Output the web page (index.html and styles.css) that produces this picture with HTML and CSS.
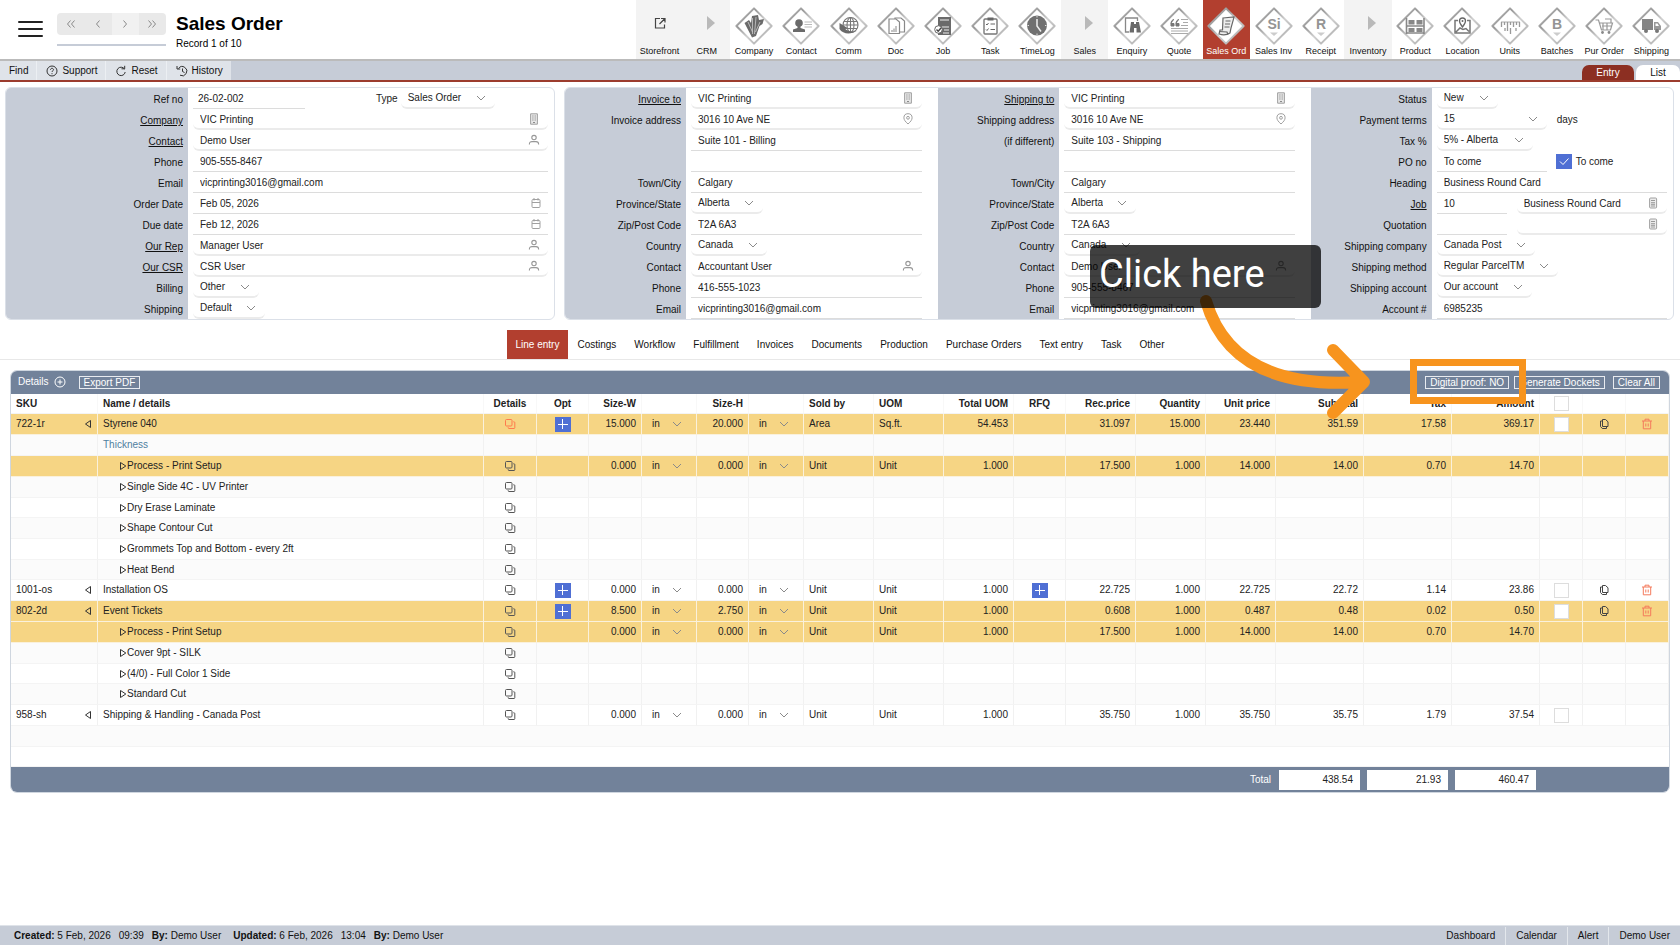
FILE: index.html
```html
<!DOCTYPE html>
<html lang="en">
<head>
<meta charset="utf-8">
<title>Sales Order</title>
<link rel="stylesheet" href="styles.css">
</head>
<body>
<svg class="sprite" aria-hidden="true">
  <defs>
    <linearGradient id="edge" x1="0" y1="0" x2="1" y2="1">
      <stop offset="0" stop-color="#d0d0d0"/><stop offset=".3" stop-color="#999"/><stop offset=".55" stop-color="#d0d0d0"/><stop offset="1" stop-color="#a4a4a4"/>
    </linearGradient>
  </defs>
  <symbol id="diamond" viewBox="0 0 38 38"><path d="M19 1.4 36.6 19 19 36.6 1.4 19z" fill="#fff" stroke="url(#edge)" stroke-width="2" stroke-linejoin="round"/></symbol>
  <symbol id="chev" viewBox="0 0 10 10"><path d="M1 3l4 4 4-4" fill="none" stroke="#8a8a8a"/></symbol>
  <symbol id="person" viewBox="0 0 12 12"><g fill="none" stroke="#979797" stroke-width="1.1"><circle cx="6" cy="3.6" r="2.2"/><path d="M1.4 10.6V10c0-1.6 1.2-2.4 2.6-2.4h4c1.400 0 2.600.8 2.600 2.400v.6"/></g></symbol>
  <symbol id="building" viewBox="0 0 12 12"><path d="M2.600.800h6.800v10.400H2.600z" fill="#e8e8e8" stroke="#a0a0a0"/><path d="M4.300 3h1.200M6.600 3h1.200M4.300 5h1.200M6.600 5h1.200M4.300 7h1.200M6.600 7h1.200M5 9.500h2" stroke="#8a8a8a"/></symbol>
  <symbol id="pin" viewBox="0 0 12 12"><g fill="none" stroke="#a0a0a0"><path d="M6 11C3.300 8.600 1.900 6.800 1.900 4.800a4.100 4.100 0 0 1 8.200 0C10.100 6.800 8.700 8.600 6 11z"/><circle cx="6" cy="4.800" r="1.400"/></g></symbol>
  <symbol id="cal" viewBox="0 0 12 12"><g fill="none" stroke="#a0a0a0"><rect x="2" y="2.500" width="8" height="8" rx="1"/><path d="M2 5.500h8M4 1v2.500M8 1v2.500"/></g></symbol>
  <symbol id="calc" viewBox="0 0 12 12"><rect x="2.600" y="1" width="7" height="10" rx="1" fill="#ececec" stroke="#a0a0a0"/><path d="M4 3.500h4M4 5.700h4M4 7.300h4M4 9h4" stroke="#999"/></symbol>
  <symbol id="copies" viewBox="0 0 12 12"><g fill="none" stroke="currentColor"><rect x="1.500" y="1.500" width="6.500" height="6.500" rx="1"/><path d="M9.300 3.800h.7a.8.800 0 0 1 .8.800v5.100a.8.800 0 0 1-.8.800H5a.8.800 0 0 1-.8-.8V9.200"/></g></symbol>
  <symbol id="dup" viewBox="0 0 12 12"><g fill="none" stroke="#444"><path d="M4.500 1.500h3l2.500 2.300v4.700h-5.500z"/><path d="M4.300 3H2.500v5.500l1.800 2h4.200V8.700"/></g></symbol>
  <symbol id="trash" viewBox="0 0 12 12"><g fill="none" stroke="#f47a5c"><path d="M1 3h10M4 3V1.200h4V3M2.300 3v7.800h7.400V3M4.800 5.500v3M7.200 5.500v3"/></g></symbol>
  <symbol id="left" viewBox="0 0 8 10"><path d="M6.500 1.500v7L1.500 5z" fill="none" stroke="#333"/></symbol>
  <symbol id="right" viewBox="0 0 8 10"><path d="M1.500 1.500v7L6.800 5z" fill="none" stroke="#333"/></symbol>
  <symbol id="play" viewBox="0 0 8 14"><path d="M0 0l8 7-8 7z" fill="#b9b9b9"/></symbol>
</svg>

<div class="page">
<header class="top">
  <button class="burger" aria-label="Menu"><i></i><i></i><i></i></button>
  <div class="pager-box">
    <div class="pager">
      <button aria-label="First"><svg viewBox="0 0 10 10"><path d="M4.500 1.500 1.500 5l3 3.500M8.500 1.500 5.500 5l3 3.500"/></svg></button>
      <button aria-label="Previous"><svg viewBox="0 0 10 10"><path d="M6.500 1.500 3.500 5l3 3.500"/></svg></button>
      <button aria-label="Next" class="dim"><svg viewBox="0 0 10 10"><path d="M3.500 1.500l3 3.500-3 3.500"/></svg></button>
      <button aria-label="Last"><svg viewBox="0 0 10 10"><path d="M1.500 1.500l3 3.500-3 3.500M5.500 1.500l3 3.500-3 3.500"/></svg></button>
    </div>
  </div>
  <div class="heading"><h1>Sales Order</h1><p>Record 1 of 10</p></div>
  <nav class="modules">
    <a href="#" class="group"><svg viewBox="0 0 38 38"><path d="M19 11.500h-4.500v9.500h9v-3.500M20 11.500h4v4M24 11.500l-5.500 5.500" fill="none" stroke="#444" stroke-width="1.200"/></svg>Storefront</a>
    <a href="#" class="group"><svg viewBox="0 0 38 38"><use href="#play" x="19" y="9" width="8" height="14"/></svg>CRM</a>
    <a href="#"><svg viewBox="0 0 38 38"><use href="#diamond"/><path d="M9.500 16l4.500-3 2 3 1-7 6-1 1 5 5-1-1.500 5-3 2-3.500 10-4 1.500z" fill="#6a6a6a"/><path d="M17.500 11v16M21 10l-1.500 17M13 15l4.500 10M25 15l-4.500 10" stroke="#ccc" stroke-width=".8"/></svg>Company</a>
    <a href="#"><svg viewBox="0 0 38 38"><use href="#diamond"/><circle cx="17" cy="16" r="3.800" fill="#6a6a6a"/><path d="M15.500 18h3v3l4.500 1.500V25h-12v-2.500l4.500-1.500z" fill="#6a6a6a"/><path d="M22.500 15h7.500M22.500 17.500h7.500M22.500 20h7.500" stroke="#bbb"/></svg>Contact</a>
    <a href="#"><svg viewBox="0 0 38 38"><use href="#diamond"/><g fill="none" stroke="#777" stroke-width="1.100"><circle cx="20.500" cy="18" r="7.500"/><ellipse cx="20.500" cy="18" rx="3.500" ry="7.500"/><path d="M13 18h15M14 14.500h13M14 21.500h13M20.500 10.500v15"/></g><path d="M9.500 16v6c3 5 11 6 17 2-4 1-9 0-12-2.500l3-.5z" fill="#6a6a6a"/></svg>Comm</a>
    <a href="#"><svg viewBox="0 0 38 38"><use href="#diamond"/><g fill="#fff" stroke="#888" stroke-width="1.200"><path d="M18 11h6l3.500 3v11h-9.500z"/><path d="M12 12h7l3.500 3v11.500H12z"/></g><path d="M15 25v-2M17 25v-3.500M19 25v-6" stroke="#888"/></svg>Doc</a>
    <a href="#"><svg viewBox="0 0 38 38"><use href="#diamond"/><path d="M14 10h13v18H14z" fill="#6a6a6a"/><path d="M16 13h9M18 20h7M20 23h5M19 26h6" stroke="#eee" stroke-width="1.200"/><circle cx="14.500" cy="22.500" r="3.800" fill="#fff" stroke="#666"/><path d="M12.500 22.500l1.700 1.700 3-3.500" fill="none" stroke="#444" stroke-width="1.400"/></svg>Job</a>
    <a href="#"><svg viewBox="0 0 38 38"><use href="#diamond"/><rect x="13" y="12" width="13" height="15" rx="1" fill="#fff" stroke="#777" stroke-width="1.400"/><path d="M16.500 10.500h6v3h-6z" fill="#666"/><path d="M15 17l1 1 1.500-2M15 22.500l1 1 1.500-2M19.500 17H24M19.500 22.500H24" fill="none" stroke="#666"/></svg>Task</a>
    <a href="#"><svg viewBox="0 0 38 38"><use href="#diamond"/><circle cx="19" cy="18.500" r="10" fill="#707070"/><path d="M19 12v7l4 5.500" fill="none" stroke="#eee" stroke-width="1.500"/><path d="M19 9v1.500M28.500 18.500H27M9.500 18.500H11M19 28v-1.500" stroke="#ddd"/></svg>TimeLog</a>
    <a href="#" class="group"><svg viewBox="0 0 38 38"><use href="#play" x="19" y="9" width="8" height="14"/></svg>Sales</a>
    <a href="#"><svg viewBox="0 0 38 38"><use href="#diamond"/><path d="M16 25h-3.500V11h12v3" fill="none" stroke="#888" stroke-width="1.300"/><path d="M18 15h3v2h2v-2h3l2 10.500h-4.500V21h-2.500v4.500H16.500z" fill="#6a6a6a"/></svg>Enquiry</a>
    <a href="#"><svg viewBox="0 0 38 38"><use href="#diamond"/><path d="M11 17c0-3 1-4 3-4.500M11 16.500h3v2.500h-3zM16 17c0-3 1-4 3-4.500M16 16.500h3v2.500h-3z" fill="#777" stroke="#777"/><path d="M21 12.500h7M23 15.500h5M21 18.500h7M11 21.500h17M11 24h17M11 26.500h17" stroke="#aaa"/></svg>Quote</a>
    <a href="#" class="on" aria-current="page"><svg viewBox="0 0 38 38"><use href="#diamond"/><path d="M16 11l11-1c-1 5-3 9-4 16-3 2-8 2-11 1l1-4h2.500z" fill="#eee" stroke="#666" stroke-width="1.200"/><path d="M12 24.500l8 .5 1 2.500M18.500 14h5M18 17h5M17.500 20h5" fill="none" stroke="#666" stroke-width="1.200"/></svg>Sales Ord</a>
    <a href="#"><svg viewBox="0 0 38 38"><use href="#diamond"/><text x="19" y="22" class="glyph">Si</text><path d="M15 25.500h8l-4 3.500z" fill="#ccc"/></svg>Sales Inv</a>
    <a href="#"><svg viewBox="0 0 38 38"><use href="#diamond"/><text x="19" y="22" class="glyph">R</text><path d="M15 25.500h8l-4 3.500z" fill="#ccc"/></svg>Receipt</a>
    <a href="#" class="group"><svg viewBox="0 0 38 38"><use href="#play" x="19" y="9" width="8" height="14"/></svg>Inventory</a>
    <a href="#"><svg viewBox="0 0 38 38"><use href="#diamond"/><path d="M10.500 11v16M28 11v16M10 19h18M10 26h18" stroke="#888" stroke-width="1.600"/><path d="M12.500 13h6v4.500h-6zM20.500 13h6v4.500h-6zM12.500 21h6v4h-6zM20.500 21h6v4h-6z" fill="#888"/></svg>Product</a>
    <a href="#"><svg viewBox="0 0 38 38"><use href="#diamond"/><path d="M15 13.500h-3v12.500h15V13.500h-3M13 25l4-4 3 1.500 3-1 3 3" fill="none" stroke="#777" stroke-width="1.500"/><path d="M19.500 20c-2-2.500-3-4-3-6a3 3 0 0 1 6 0c0 2-1 3.500-3 6z" fill="#fff" stroke="#666" stroke-width="1.300"/><circle cx="19.500" cy="14" r="1" fill="#666"/></svg>Location</a>
    <a href="#"><svg viewBox="0 0 38 38"><use href="#diamond"/><path d="M10 15h19" stroke="#aaa"/><path d="M10.500 15v5M13.500 15v3M16.500 15v9M19.500 15v3M22.500 15v5M25.500 15v3M28.500 15v5M19.500 21v6M14 21v3M25 21v3" stroke="#999" stroke-width="1.300"/></svg>Units</a>
    <a href="#"><svg viewBox="0 0 38 38"><use href="#diamond"/><text x="19" y="22" class="glyph">B</text><path d="M15 25.500h8l-4 3.500z" fill="#ccc"/></svg>Batches</a>
    <a href="#"><svg viewBox="0 0 38 38"><use href="#diamond"/><path d="M10.500 13h3l3 10h9l2-7H14.500M17 19h9M18 16v7M22 16v7M20 12h6v4" fill="none" stroke="#999" stroke-width="1.200"/><circle cx="17.500" cy="25.500" r="1.400" fill="#888"/><circle cx="24" cy="25.500" r="1.400" fill="#888"/></svg>Pur Order</a>
    <a href="#"><svg viewBox="0 0 38 38"><use href="#diamond"/><path d="M10 12h11v11H10z" fill="#858585"/><path d="M22 15h4l3 4v4h-7z" fill="#999"/><path d="M23.500 16.500h2l1.500 2.500h-3.500z" fill="#fff"/><circle cx="14" cy="24" r="2" fill="#777"/><circle cx="25" cy="24" r="2" fill="#777"/></svg>Shipping</a>
  </nav>
</header>

<div class="toolbar">
  <button>Find</button>
  <button><svg viewBox="0 0 12 12"><circle cx="6" cy="6" r="5"/><path d="M4.500 4.800c0-2 3-2 3 0 0 1-1.500 1-1.500 2.200M6 8.200v1"/></svg>Support</button>
  <button><svg viewBox="0 0 12 12"><path d="M9.500 4A4.200 4.200 0 1 0 10.200 7M6.500 3.800h3.200V.8"/></svg>Reset</button>
  <button><svg viewBox="0 0 12 12"><path d="M2.500 3.500A4.600 4.600 0 1 1 4 10.200M1 1v3h3.200M6.500 3.500v3l2 1"/></svg>History</button>
  <div class="views"><a href="#" class="on">Entry</a><a href="#">List</a></div>
</div>

<form class="forms">
  <section class="panel main-info">
    <div class="col">
      <div class="row"><label for="ref">Ref no</label><div class="val"><input id="ref" class="ref" value="26-02-002"><label class="inline type" for="type">Type</label><span class="pick"><select id="type"><option>Sales Order</option></select><svg><use href="#chev"/></svg></span></div></div>
      <div class="row"><label for="co"><a href="#">Company</a></label><div class="val"><span class="look"><input id="co" value="VIC Printing"><svg><use href="#building"/></svg></span></div></div>
      <div class="row"><label for="ct"><a href="#">Contact</a></label><div class="val"><span class="look"><input id="ct" value="Demo User"><svg><use href="#person"/></svg></span></div></div>
      <div class="row"><label for="ph">Phone</label><div class="val"><input id="ph" value="905-555-8467"></div></div>
      <div class="row"><label for="em">Email</label><div class="val"><input id="em" value="vicprinting3016@gmail.com"></div></div>
      <div class="row"><label for="od">Order Date</label><div class="val"><span class="look date"><input id="od" value="Feb 05, 2026"><svg><use href="#cal"/></svg></span></div></div>
      <div class="row"><label for="dd">Due date</label><div class="val"><span class="look date"><input id="dd" value="Feb 12, 2026"><svg><use href="#cal"/></svg></span></div></div>
      <div class="row"><label for="rep"><a href="#">Our Rep</a></label><div class="val"><span class="look"><input id="rep" value="Manager User"><svg><use href="#person"/></svg></span></div></div>
      <div class="row"><label for="csr"><a href="#">Our CSR</a></label><div class="val"><span class="look"><input id="csr" value="CSR User"><svg><use href="#person"/></svg></span></div></div>
      <div class="row"><label for="bill">Billing</label><div class="val"><span class="pick"><select id="bill"><option>Other</option></select><svg><use href="#chev"/></svg></span></div></div>
      <div class="row"><label for="ship">Shipping</label><div class="val"><span class="pick"><select id="ship"><option>Default</option></select><svg><use href="#chev"/></svg></span></div></div>
    </div>
  </section>
  <section class="panel details-info">
    <div class="col wide-end">
      <div class="row"><label for="ito"><a href="#">Invoice to</a></label><div class="val"><span class="look"><input id="ito" value="VIC Printing"><svg><use href="#building"/></svg></span></div></div>
      <div class="row"><label for="ia">Invoice address</label><div class="val"><span class="look"><input id="ia" value="3016 10 Ave NE"><svg><use href="#pin"/></svg></span></div></div>
      <div class="row"><label for="ia2"></label><div class="val"><input id="ia2" aria-label="Invoice address line 2" value="Suite 101 - Billing"></div></div>
      <div class="row"><label for="ia3"></label><div class="val"><input id="ia3" aria-label="Invoice address line 3"></div></div>
      <div class="row"><label for="ic">Town/City</label><div class="val"><input id="ic" value="Calgary"></div></div>
      <div class="row"><label for="ip">Province/State</label><div class="val"><span class="pick"><select id="ip"><option>Alberta</option></select><svg><use href="#chev"/></svg></span></div></div>
      <div class="row"><label for="iz">Zip/Post Code</label><div class="val"><input id="iz" value="T2A 6A3"></div></div>
      <div class="row"><label for="icn">Country</label><div class="val"><span class="pick"><select id="icn"><option>Canada</option></select><svg><use href="#chev"/></svg></span></div></div>
      <div class="row"><label for="ict">Contact</label><div class="val"><span class="look"><input id="ict" value="Accountant User"><svg><use href="#person"/></svg></span></div></div>
      <div class="row"><label for="iph">Phone</label><div class="val"><input id="iph" value="416-555-1023"></div></div>
      <div class="row"><label for="iem">Email</label><div class="val"><input id="iem" value="vicprinting3016@gmail.com"></div></div>
    </div>
    <div class="col wide-end">
      <div class="row"><label for="sto"><a href="#">Shipping to</a></label><div class="val"><span class="look"><input id="sto" value="VIC Printing"><svg><use href="#building"/></svg></span></div></div>
      <div class="row"><label for="sa">Shipping address</label><div class="val"><span class="look"><input id="sa" value="3016 10 Ave NE"><svg><use href="#pin"/></svg></span></div></div>
      <div class="row"><label for="sa2">(if different)</label><div class="val"><input id="sa2" value="Suite 103 - Shipping"></div></div>
      <div class="row"><label for="sa3"></label><div class="val"><input id="sa3" aria-label="Shipping address line 3"></div></div>
      <div class="row"><label for="sc">Town/City</label><div class="val"><input id="sc" value="Calgary"></div></div>
      <div class="row"><label for="sp">Province/State</label><div class="val"><span class="pick"><select id="sp"><option>Alberta</option></select><svg><use href="#chev"/></svg></span></div></div>
      <div class="row"><label for="sz">Zip/Post Code</label><div class="val"><input id="sz" value="T2A 6A3"></div></div>
      <div class="row"><label for="scn">Country</label><div class="val"><span class="pick"><select id="scn"><option>Canada</option></select><svg><use href="#chev"/></svg></span></div></div>
      <div class="row"><label for="sct">Contact</label><div class="val"><span class="look"><input id="sct" value="Demo User"><svg><use href="#person"/></svg></span></div></div>
      <div class="row"><label for="sph">Phone</label><div class="val"><input id="sph" value="905-555-8467"></div></div>
      <div class="row"><label for="sem">Email</label><div class="val"><input id="sem" value="vicprinting3016@gmail.com"></div></div>
    </div>
    <div class="col">
      <div class="row"><label for="st">Status</label><div class="val"><span class="pick"><select id="st"><option>New</option></select><svg><use href="#chev"/></svg></span></div></div>
      <div class="row"><label for="pt">Payment terms</label><div class="val"><span class="pick fixed"><select id="pt"><option>15</option></select><svg><use href="#chev"/></svg></span><span class="unit">days</span></div></div>
      <div class="row"><label for="tx">Tax %</label><div class="val"><span class="pick"><select id="tx"><option>5% - Alberta</option></select><svg><use href="#chev"/></svg></span></div></div>
      <div class="row"><label for="po">PO no</label><div class="val"><input id="po" class="po" value="To come"><label class="inline come"><input type="checkbox" checked><svg viewBox="0 0 16 15"><path d="M4 7.500l3 3 5.500-6" fill="none" stroke="#fff"/></svg>To come</label></div></div>
      <div class="row"><label for="hd">Heading</label><div class="val"><input id="hd" value="Business Round Card"></div></div>
      <div class="row"><label for="jb"><a href="#">Job</a></label><div class="val pair"><input id="jb" class="short-in" value="10"><span class="look"><input aria-label="Job name" value="Business Round Card"><svg><use href="#calc"/></svg></span></div></div>
      <div class="row"><label for="qt">Quotation</label><div class="val pair"><input id="qt" class="short-in"><span class="look"><input aria-label="Quotation name"><svg><use href="#calc"/></svg></span></div></div>
      <div class="row"><label for="sco">Shipping company</label><div class="val"><span class="pick"><select id="sco"><option>Canada Post</option></select><svg><use href="#chev"/></svg></span></div></div>
      <div class="row"><label for="sm">Shipping method</label><div class="val"><span class="pick"><select id="sm"><option>Regular ParcelTM</option></select><svg><use href="#chev"/></svg></span></div></div>
      <div class="row"><label for="sac">Shipping account</label><div class="val"><span class="pick"><select id="sac"><option>Our account</option></select><svg><use href="#chev"/></svg></span></div></div>
      <div class="row"><label for="acn">Account #</label><div class="val"><input id="acn" value="6985235"></div></div>
    </div>
  </section>
</form>

<nav class="tabs">
  <a href="#" class="on">Line entry</a><a href="#">Costings</a><a href="#">Workflow</a><a href="#">Fulfillment</a><a href="#">Invoices</a><a href="#">Documents</a><a href="#">Production</a><a href="#">Purchase Orders</a><a href="#">Text entry</a><a href="#">Task</a><a href="#">Other</a>
</nav>

<section class="lines">
  <div class="bar">
    <span>Details</span>
    <button class="add" aria-label="Add line"><svg viewBox="0 0 12 12"><circle cx="6" cy="6" r="5"/><path d="M6 3.500v5M3.500 6h5"/></svg></button>
    <button class="ghost">Export PDF</button>
    <div class="actions"><button class="ghost">Digital proof: NO</button><button class="ghost">Generate Dockets</button><button class="ghost clear">Clear All</button></div>
  </div>
  <table>
    <colgroup><col class="w87"><col><col class="w53"><col class="w52"><col class="w53"><col class="w55"><col class="w52"><col class="w55"><col class="w70"><col class="w70"><col class="w70"><col class="w52"><col class="w70"><col class="w70"><col class="w70"><col class="w88"><col class="w88"><col class="w88"><col class="w43"><col class="w43"><col class="w43"></colgroup>
    <thead><tr><th>SKU<th>Name / details<th class="c">Details<th class="c">Opt<th class="r">Size-W<th><th class="r">Size-H<th><th>Sold by<th>UOM<th class="r">Total UOM<th class="c">RFQ<th class="r">Rec.price<th class="r">Quantity<th class="r">Unit price<th class="r">Subtotal<th class="r">Tax<th class="r">Amount<th class="c"><input type="checkbox" aria-label="Select all"><th><th></tr></thead>
    <tbody>
      <tr class="hot"><td class="sku"><span>722-1r<svg><use href="#left"/></svg></span><td>Styrene 040<td class="c red"><svg><use href="#copies"/></svg><td class="c"><button class="plus" aria-label="Options"></button><td class="r">15.000<td><span class="pick"><select aria-label="Width unit"><option>in</option></select><svg><use href="#chev"/></svg></span><td class="r">20.000<td><span class="pick"><select aria-label="Height unit"><option>in</option></select><svg><use href="#chev"/></svg></span><td>Area<td>Sq.ft.<td class="r">54.453<td><td class="r">31.097<td class="r">15.000<td class="r">23.440<td class="r">351.59<td class="r">17.58<td class="r">369.17<td class="c"><input type="checkbox" aria-label="Select line"><td class="c"><svg><use href="#dup"/></svg><td class="c"><svg><use href="#trash"/></svg></tr>
      <tr><td><td class="note">Thickness<td><td><td><td><td><td><td><td><td><td><td><td><td><td><td><td><td><td><td></tr>
      <tr class="hot"><td><td class="sub"><span><svg><use href="#right"/></svg>Process - Print Setup</span><td class="c"><svg><use href="#copies"/></svg><td><td class="r">0.000<td><span class="pick"><select aria-label="Width unit"><option>in</option></select><svg><use href="#chev"/></svg></span><td class="r">0.000<td><span class="pick"><select aria-label="Height unit"><option>in</option></select><svg><use href="#chev"/></svg></span><td>Unit<td>Unit<td class="r">1.000<td><td class="r">17.500<td class="r">1.000<td class="r">14.000<td class="r">14.00<td class="r">0.70<td class="r">14.70<td><td><td></tr>
      <tr><td><td class="sub"><span><svg><use href="#right"/></svg>Single Side 4C - UV Printer</span><td class="c"><svg><use href="#copies"/></svg><td><td><td><td><td><td><td><td><td><td><td><td><td><td><td><td><td><td></tr>
      <tr class="tight"><td><td class="sub"><span><svg><use href="#right"/></svg>Dry Erase Laminate</span><td class="c"><svg><use href="#copies"/></svg><td><td><td><td><td><td><td><td><td><td><td><td><td><td><td><td><td><td></tr>
      <tr><td><td class="sub"><span><svg><use href="#right"/></svg>Shape Contour Cut</span><td class="c"><svg><use href="#copies"/></svg><td><td><td><td><td><td><td><td><td><td><td><td><td><td><td><td><td><td></tr>
      <tr><td><td class="sub"><span><svg><use href="#right"/></svg>Grommets Top and Bottom - every 2ft</span><td class="c"><svg><use href="#copies"/></svg><td><td><td><td><td><td><td><td><td><td><td><td><td><td><td><td><td><td></tr>
      <tr class="tight"><td><td class="sub"><span><svg><use href="#right"/></svg>Heat Bend</span><td class="c"><svg><use href="#copies"/></svg><td><td><td><td><td><td><td><td><td><td><td><td><td><td><td><td><td><td></tr>
      <tr><td class="sku"><span>1001-os<svg><use href="#left"/></svg></span><td>Installation OS<td class="c"><svg><use href="#copies"/></svg><td class="c"><button class="plus" aria-label="Options"></button><td class="r">0.000<td><span class="pick"><select aria-label="Width unit"><option>in</option></select><svg><use href="#chev"/></svg></span><td class="r">0.000<td><span class="pick"><select aria-label="Height unit"><option>in</option></select><svg><use href="#chev"/></svg></span><td>Unit<td>Unit<td class="r">1.000<td class="c"><button class="plus" aria-label="Request quote"></button><td class="r">22.725<td class="r">1.000<td class="r">22.725<td class="r">22.72<td class="r">1.14<td class="r">23.86<td class="c"><input type="checkbox" aria-label="Select line"><td class="c"><svg><use href="#dup"/></svg><td class="c"><svg><use href="#trash"/></svg></tr>
      <tr class="hot"><td class="sku"><span>802-2d<svg><use href="#left"/></svg></span><td>Event Tickets<td class="c"><svg><use href="#copies"/></svg><td class="c"><button class="plus" aria-label="Options"></button><td class="r">8.500<td><span class="pick"><select aria-label="Width unit"><option>in</option></select><svg><use href="#chev"/></svg></span><td class="r">2.750<td><span class="pick"><select aria-label="Height unit"><option>in</option></select><svg><use href="#chev"/></svg></span><td>Unit<td>Unit<td class="r">1.000<td><td class="r">0.608<td class="r">1.000<td class="r">0.487<td class="r">0.48<td class="r">0.02<td class="r">0.50<td class="c"><input type="checkbox" aria-label="Select line"><td class="c"><svg><use href="#dup"/></svg><td class="c"><svg><use href="#trash"/></svg></tr>
      <tr class="hot"><td><td class="sub"><span><svg><use href="#right"/></svg>Process - Print Setup</span><td class="c"><svg><use href="#copies"/></svg><td><td class="r">0.000<td><span class="pick"><select aria-label="Width unit"><option>in</option></select><svg><use href="#chev"/></svg></span><td class="r">0.000<td><span class="pick"><select aria-label="Height unit"><option>in</option></select><svg><use href="#chev"/></svg></span><td>Unit<td>Unit<td class="r">1.000<td><td class="r">17.500<td class="r">1.000<td class="r">14.000<td class="r">14.00<td class="r">0.70<td class="r">14.70<td><td><td></tr>
      <tr><td><td class="sub"><span><svg><use href="#right"/></svg>Cover 9pt - SILK</span><td class="c"><svg><use href="#copies"/></svg><td><td><td><td><td><td><td><td><td><td><td><td><td><td><td><td><td><td></tr>
      <tr class="tight"><td><td class="sub"><span><svg><use href="#right"/></svg>(4/0) - Full Color 1 Side</span><td class="c"><svg><use href="#copies"/></svg><td><td><td><td><td><td><td><td><td><td><td><td><td><td><td><td><td><td></tr>
      <tr><td><td class="sub"><span><svg><use href="#right"/></svg>Standard Cut</span><td class="c"><svg><use href="#copies"/></svg><td><td><td><td><td><td><td><td><td><td><td><td><td><td><td><td><td><td></tr>
      <tr><td class="sku"><span>958-sh<svg><use href="#left"/></svg></span><td>Shipping &amp; Handling - Canada Post<td class="c"><svg><use href="#copies"/></svg><td><td class="r">0.000<td><span class="pick"><select aria-label="Width unit"><option>in</option></select><svg><use href="#chev"/></svg></span><td class="r">0.000<td><span class="pick"><select aria-label="Height unit"><option>in</option></select><svg><use href="#chev"/></svg></span><td>Unit<td>Unit<td class="r">1.000<td><td class="r">35.750<td class="r">1.000<td class="r">35.750<td class="r">35.75<td class="r">1.79<td class="r">37.54<td class="c"><input type="checkbox" aria-label="Select line"><td><td></tr>
      <tr class="blank"><td colspan="21"></tr>
      <tr class="blank tight"><td colspan="21"></tr>
    </tbody>
    <tfoot><tr><th colspan="15" class="r">Total<td><output>438.54</output><td><output>21.93</output><td><output>460.47</output><td colspan="3"></tr></tfoot>
  </table>
</section>

<footer class="status">
  <p><b>Created:</b> 5 Feb, 2026</p><p>09:39</p><p class="end"><b>By:</b> Demo User</p><p><b>Updated:</b> 6 Feb, 2026</p><p>13:04</p><p><b>By:</b> Demo User</p>
  <nav><a href="#">Dashboard</a><a href="#">Calendar</a><a href="#">Alert</a><a href="#">Demo User</a></nav>
</footer>

<svg class="arrow" viewBox="0 0 180 130" aria-hidden="true"><path d="M16 11C32 66 78 98 170 92M143 60l31 32-31 31"/></svg>
<div class="frame"></div>
<div class="callout">Click here</div>
</div>
</body>
</html>
```
FILE: styles.css
```css
* { box-sizing: border-box; }
body { margin: 0; background: #fff; color: #222; font: 10px/12px "Liberation Sans", Arial, sans-serif; }
a { color: inherit; text-decoration: none; }
p, h1 { margin: 0; }
button, input, select { font: inherit; color: inherit; margin: 0; padding: 0; border: 0; background: none; border-radius: 0; }
svg { display: block; }
.sprite { position: absolute; width: 0; height: 0; }
.page { position: relative; min-height: 100vh; display: flex; flex-direction: column; overflow: hidden; }

/* header */
.top { display: flex; height: 61px; border-bottom: 2px solid #bbb; padding-right: 5px; }
.burger { display: flex; flex-direction: column; gap: 5px; width: 25px; margin: 21px 14px 0 18px; }
.burger i { height: 2px; background: #222; border-radius: 1px; }
.pager-box { width: 109px; height: 46px; margin: 0 10px 0 0; padding-top: 13px; border-bottom: 2px solid #c6ccd7; }
.pager { display: grid; grid-template-columns: repeat(4, 1fr); height: 22px; background: #e9e9e9; border-radius: 4px; overflow: hidden; }
.pager button { display: grid; place-items: center; }
.pager .dim { background: #f1f1f1; }
.pager svg { width: 10px; height: 10px; fill: none; stroke: #888; }
.heading { padding-top: 13px; color: #000; }
.heading h1 { font-size: 19px; line-height: 22px; }
.heading p { margin-top: 3px; }
.modules { display: grid; grid-template-columns: repeat(22, 1fr); width: 1039px; margin-left: auto; font-size: 9px; color: #111; }
.modules a { display: flex; flex-direction: column; align-items: center; padding-top: 7px; white-space: nowrap; }
.modules svg { width: 38px; height: 38px; }
.modules .group { background: #f3f3f3; }
.modules .on { background: #b23f2f; color: #fff; }
.glyph { font: bold 14px "Liberation Sans", Arial, sans-serif; fill: #949494; text-anchor: middle; }

/* toolbar */
.toolbar { display: flex; height: 21px; background: #c6ccd7; border-bottom: 2px solid #9c3c2e; color: #111; }
.toolbar button { display: flex; align-items: center; gap: 4px; padding: 0 8px 0 9px; background: #dfe3e9; border-right: 1px solid #eceff3; }
.toolbar button:last-of-type { border-right: 0; }
.toolbar svg { width: 12px; height: 12px; fill: none; stroke: #333; }
.views { display: flex; gap: 2px; margin-left: auto; padding-top: 4px; }
.views a { width: 52px; padding-top: 2px; text-align: center; background: #fff; border-radius: 7px 7px 0 0; }
.views a:last-child { width: 44px; }
.views .on { background: #8c2f22; color: #fff; }

/* form panels */
.forms { display: grid; grid-template-columns: 550fr 1110fr; gap: 9px; padding: 5px 6px 0 5px; }
.panel { border: 1px solid #dbe0e8; border-radius: 6px; overflow: hidden; }
.details-info { display: grid; grid-template-columns: 374fr 373fr 363fr; }
.row { display: grid; grid-template-columns: 121px 1fr; height: 21px; }
.main-info .row { grid-template-columns: 182px 1fr; }
.row > label { padding: 6px 5px 0 0; text-align: right; background: #c6ccd7; color: #111; }
.row label a { text-decoration: underline; }
.val { display: flex; min-width: 0; padding: 0 6px 0 5px; }
.wide-end .val { padding-right: 16px; }
.val input { flex: 1; min-width: 0; padding: 1px 7px 0; border-bottom: 1px solid #dcdcdc; }
.val .ref { flex: 0 0 112px; padding: 1px 5px 0; }
.inline { display: flex; align-items: center; }
.type { margin: 0 3px 0 71px; }
.look { display: flex; flex: 1; min-width: 0; align-items: center; padding-right: 8px; border-bottom: 2px solid #ebebeb; border-radius: 0 0 6px 6px; }
.look input { height: 19px; border-bottom: 0; }
.look svg { width: 12px; height: 12px; }
.look.date { padding-right: 6px; border-bottom: 1px solid #dcdcdc; border-radius: 0; }
.pick { display: inline-grid; align-items: center; border-bottom: 2px solid #ebebeb; border-radius: 0 0 6px 6px; }
.pick select { grid-area: 1 / 1; height: 19px; appearance: none; padding: 1px 33px 0 7px; }
.pick svg { grid-area: 1 / 1; justify-self: end; width: 10px; height: 10px; margin-right: 9px; pointer-events: none; }
.pick.fixed { width: 110px; }
.unit { padding: 5px 0 0 10px; }
.val .po { flex: 0 0 110px; }
.come { gap: 4px; margin-left: 9px; }
.come input { display: none; }
.come svg { width: 16px; height: 15px; background: #4f6fd4; }
.pair { gap: 10px; }
.val .short-in { flex: 0 0 70px; }

/* section tabs */
.tabs { display: flex; justify-content: center; margin-top: 10px; border-bottom: 1px solid #e8e8e8; color: #111; }
.tabs a { padding: 9px 9px 8px; }
.tabs .on { background: #b23f2f; color: #fff; }

/* order lines */
.lines { margin: 10px 10px 0; border: 1px solid #cfd6df; border-radius: 7px; overflow: hidden; }
.bar { display: flex; align-items: center; height: 23px; padding: 0 9px 1px 7px; background: #72829a; color: #fff; }
.add { margin: 0 13px 0 5px; }
.add svg { width: 12px; height: 12px; fill: none; stroke: #fff; }
.ghost { height: 13px; padding: 0 4px; line-height: 11px; border: 1px solid #e8ebf0; }
.actions { display: flex; gap: 5px; margin-left: auto; }
.clear { margin-left: 3px; }
table { width: 100%; table-layout: fixed; border-collapse: separate; border-spacing: 0; }
.w43 { width: 43px; } .w52 { width: 52px; } .w53 { width: 53px; } .w55 { width: 55px; } .w70 { width: 70px; } .w87 { width: 87px; } .w88 { width: 88px; }
th, td { height: 21px; padding: 0 5px; text-align: left; white-space: nowrap; border-right: 1px solid #f1f1f1; border-bottom: 1px solid #f4f4f4; }
thead th { height: 20px; border-right-color: #f8f8f8; }
.tight td { height: 20px; }
tbody tr:nth-child(even) { background: #fbfbfb; }
tbody .hot, tbody .hot:nth-child(even) { background: #f6d584; }
.hot td { border-color: #faf1dc; }
.r { text-align: right; padding-right: 5px; }
.c { text-align: center; padding: 0; }
.c svg { width: 12px; height: 12px; margin: 0 auto; color: #555; }
.c.red svg { color: #ff7a4d; }
.sku span, .sub span { display: flex; align-items: center; }
.sku span { justify-content: space-between; }
.sku svg, .sub svg { width: 8px; height: 10px; }
.sku { padding-right: 5px; }
.sub { padding-left: 21px; }
.note { color: #4f7f9f; }
td .pick { display: grid; border: 0; }
td .pick select { padding: 0 20px 0 5px; }
td .pick svg { margin-right: 9px; }
.plus { display: block; width: 16px; height: 15px; margin: 0 auto; background: linear-gradient(#fff, #fff) center / 10px 1px no-repeat, linear-gradient(#fff, #fff) center / 1px 10px no-repeat, #4f6fd4; }
.c input { display: block; width: 15px; height: 15px; margin: 0 auto; appearance: none; background: #fff; border: 1px solid #ddd; }
.blank td { border-right: 0; }
tfoot th, tfoot td { height: 25px; padding: 0 4px 0 3px; background: #72829a; border: 0; color: #fff; font-weight: normal; }
output { display: block; padding: 4px 7px; text-align: right; color: #222; background: #fff; }

/* status bar */
.status { display: flex; align-items: center; gap: 8px; height: 20px; margin-top: auto; padding: 1px 0 0 14px; background: #c6ccd7; border-top: 1px solid #dfe3e9; color: #111; }
.status .end { margin-right: 4px; }
.status nav { display: flex; align-self: stretch; margin-left: auto; }
.status nav a { padding: 3px 10px 0; border-left: 1px solid #e3e7ec; }
.status nav a:first-child { border-left: 0; }

/* guide overlay */
.arrow { position: absolute; top: 290px; right: 310px; width: 180px; height: 130px; fill: none; stroke: #f7941e; stroke-width: 12px; stroke-linecap: round; stroke-linejoin: round; }
.frame { position: absolute; top: 359px; right: 154px; width: 116px; height: 45px; border: 7px solid #f7941e; }
.callout { position: absolute; top: 245px; right: 359px; width: 231px; height: 63px; padding: 8px 9px; border-radius: 6px; background: rgba(0, 0, 0, .75); color: #fff; font: 38px/42px Roboto, "Liberation Sans", sans-serif; }
```
